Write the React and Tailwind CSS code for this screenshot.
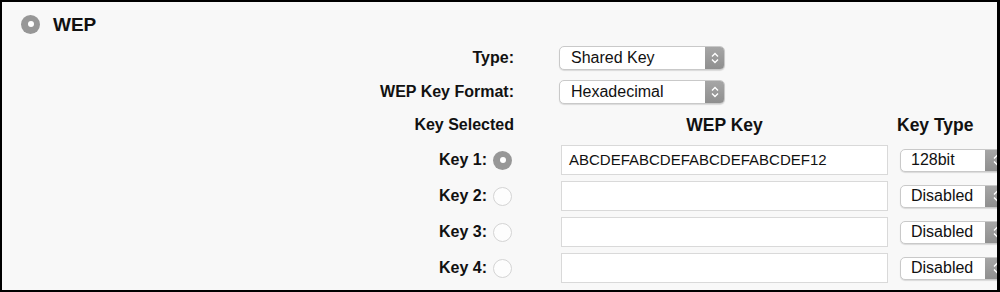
import React from "react";

// kleine Pfeile fuer das Auswahlfeld
function Stepper({ className }) {
  return (
    <div
      className={
        "flex items-center justify-center shrink-0 bg-gradient-to-b from-[#a6a6a6] to-[#8f8f8f] " +
        className
      }
    >
      <svg width="10" height="14" viewBox="0 0 10 14">
        <path d="M2 5.5 L5 2.5 L8 5.5" fill="none" stroke="#fff" strokeWidth="1.4" />
        <path d="M2 8.5 L5 11.5 L8 8.5" fill="none" stroke="#fff" strokeWidth="1.4" />
      </svg>
    </div>
  );
}

function Auswahl({ value, className, stepperClass }) {
  return (
    <div
      className={
        "flex items-stretch shrink-0 bg-white border border-[#c9c9c9] rounded-[5px] overflow-hidden shadow-[0_1px_1px_rgba(0,0,0,0.12)] " +
        className
      }
    >
      <div className="flex-1 flex items-center text-[16px] text-[#111]">{value}</div>
      <Stepper className={stepperClass} />
    </div>
  );
}

function Radio({ checked }) {
  if (checked) {
    return (
      <div className="w-[19px] h-[19px] rounded-full bg-[#979797] flex items-center justify-center shrink-0">
        <div className="w-[6px] h-[6px] rounded-full bg-white"></div>
      </div>
    );
  }
  return (
    <div className="w-[19px] h-[19px] rounded-full border border-[#d4d4d4] bg-[#fdfdfd] shrink-0"></div>
  );
}

const keys = [
  { name: "Key 1:", checked: true, value: "ABCDEFABCDEFABCDEFABCDEF12", type: "128bit" },
  { name: "Key 2:", checked: false, value: "", type: "Disabled" },
  { name: "Key 3:", checked: false, value: "", type: "Disabled" },
  { name: "Key 4:", checked: false, value: "", type: "Disabled" },
];

export default function App() {
  return (
    <div className="w-[1000px] h-[292px] box-border border-t-[2px] border-l-[2px] border-b-[2px] border-r-[3px] border-black bg-[#f8f8f8] overflow-hidden font-['Liberation_Sans',Arial,sans-serif] text-[#111]">
      <div className="flex flex-col">
        {/* Titel */}
        <div className="h-[44px] flex items-center pl-[19px]">
          <Radio checked />
          <div className="ml-[13px] text-[19px] font-bold leading-none">WEP</div>
        </div>

        {/* Typ */}
        <div className="h-[24px] flex items-center">
          <div className="w-[512px] shrink-0 text-right text-[16px] font-bold">Type:</div>
          <Auswahl value="Shared Key" className="ml-[45px] w-[166px] h-[24px] pl-[11px]" stepperClass="w-[19px]" />
        </div>

        {/* Format */}
        <div className="h-[24px] flex items-center mt-[10px]">
          <div className="w-[512px] shrink-0 text-right text-[16px] font-bold">WEP Key Format:</div>
          <Auswahl value="Hexadecimal" className="ml-[45px] w-[166px] h-[24px] pl-[11px]" stepperClass="w-[19px]" />
        </div>

        {/* Kopfzeile */}
        <div className="h-[28px] flex items-center mt-[7px] text-[16px] font-bold">
          <div className="w-[512px] shrink-0 text-right">Key Selected</div>
          <div className="ml-[47px] w-[327px] shrink-0 text-center text-[17.5px]">WEP Key</div>
          <div className="ml-[9px] shrink-0 text-[17.5px]">Key Type</div>
        </div>

        {/* Schluessel */}
        <div className="flex flex-col gap-[6px] mt-[6px]">
          {keys.map((k) => (
            <div key={k.name} className="h-[30px] flex items-center">
              <div className="w-[512px] shrink-0 flex items-center justify-end pr-[2px]">
                <div className="text-[16px] font-bold mr-[6px]">{k.name}</div>
                <Radio checked={k.checked} />
              </div>
              <div className="ml-[47px] w-[327px] h-[30px] shrink-0 bg-white border border-[#d9d9d9] flex items-center pl-[7px] text-[15px]">
                {k.value}
              </div>
              <Auswahl value={k.type} className="ml-[12px] w-[110px] h-[23px] pl-[10px]" stepperClass="w-[24px]" />
            </div>
          ))}
        </div>
      </div>
    </div>
  );
}
